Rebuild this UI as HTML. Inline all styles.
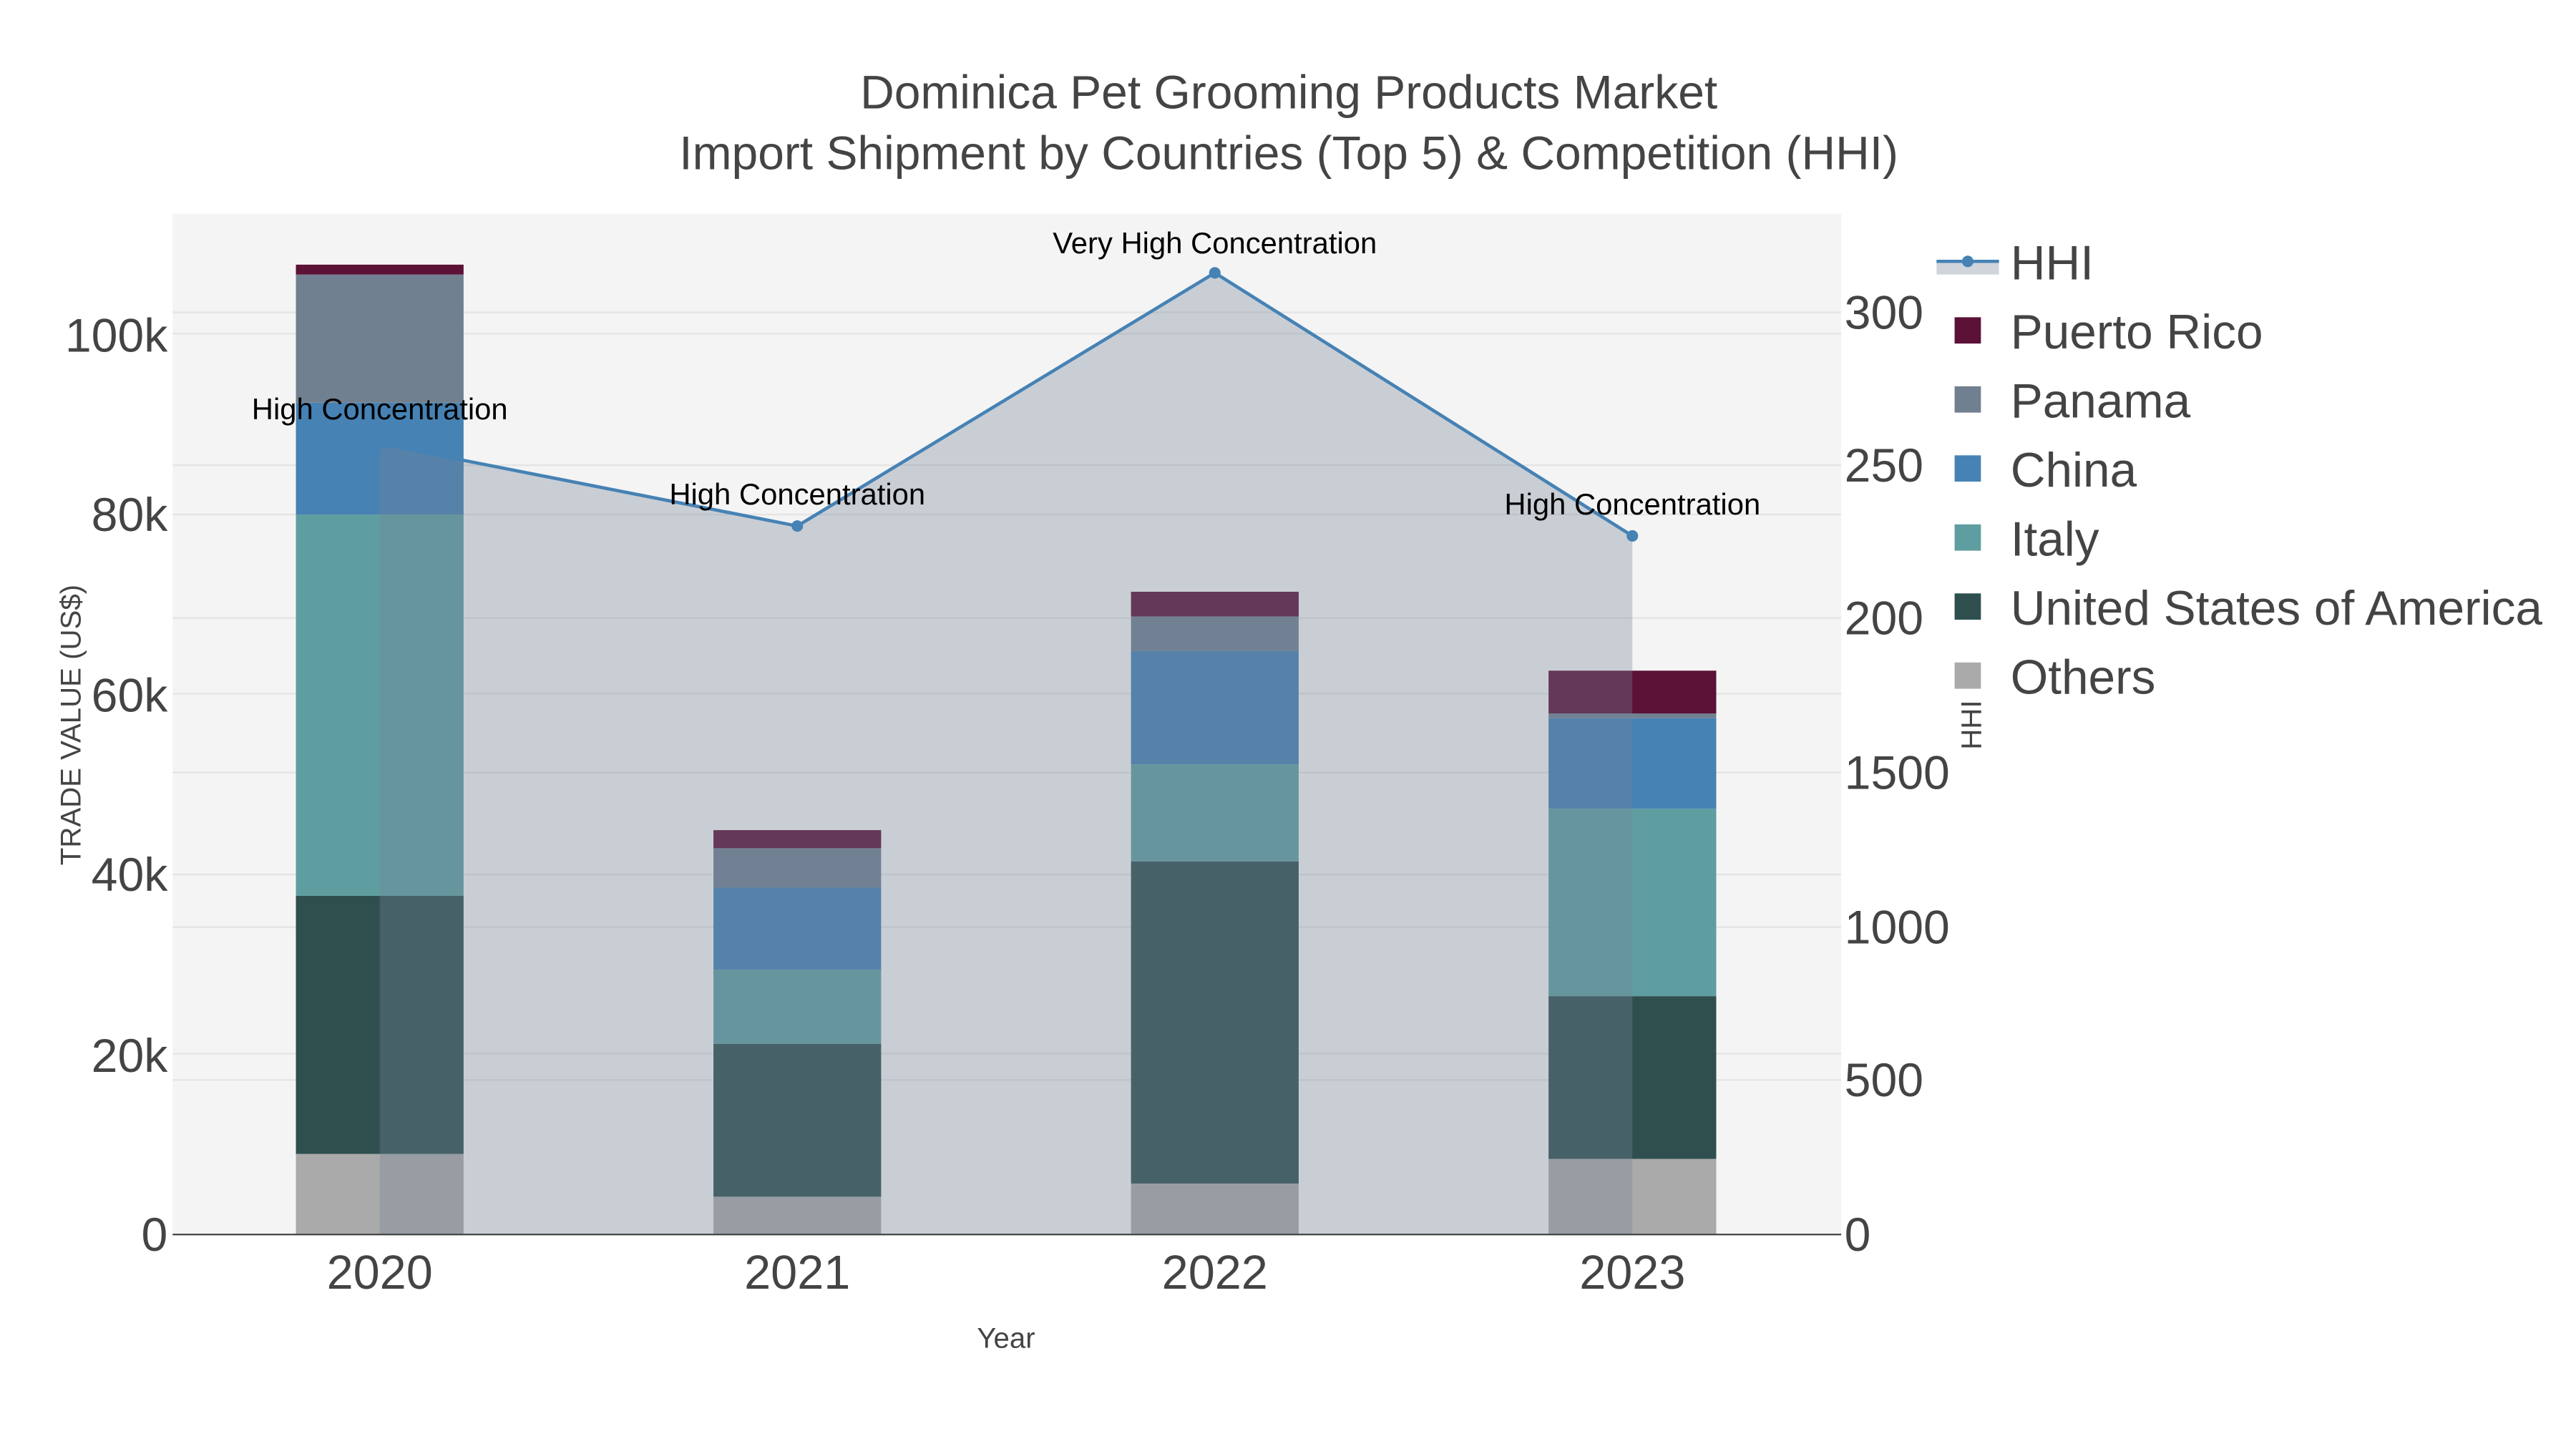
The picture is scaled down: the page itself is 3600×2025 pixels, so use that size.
<!DOCTYPE html>
<html><head><meta charset="utf-8"><style>
html,body{margin:0;padding:0;background:#fff;}
svg{display:block;}
text{font-family:"Liberation Sans",sans-serif;}
</style></head><body>
<svg width="3600" height="2025" viewBox="0 0 1567 881.5" preserveAspectRatio="none" xmlns="http://www.w3.org/2000/svg">
<rect x="0" y="0" width="1570" height="885" fill="#fff"/>
<rect x="105" y="130" width="1015" height="621" fill="#f4f4f4"/>
<g stroke="#e4e4e4" stroke-width="1">
<line x1="105" x2="1120" y1="641" y2="641"/><line x1="105" x2="1120" y1="532" y2="532"/>
<line x1="105" x2="1120" y1="422" y2="422"/><line x1="105" x2="1120" y1="313" y2="313"/>
<line x1="105" x2="1120" y1="203" y2="203"/>
<line x1="105" x2="1120" y1="657" y2="657"/><line x1="105" x2="1120" y1="564" y2="564"/>
<line x1="105" x2="1120" y1="470" y2="470"/><line x1="105" x2="1120" y1="376" y2="376"/>
<line x1="105" x2="1120" y1="283" y2="283"/><line x1="105" x2="1120" y1="190" y2="190"/>
</g>
<g>
<rect x="180" y="702" width="102" height="49" fill="#aaaaaa"/>
<rect x="180" y="545" width="102" height="157" fill="#2f4f4f"/>
<rect x="180" y="313" width="102" height="232" fill="#5f9ea0"/>
<rect x="180" y="245" width="102" height="68" fill="#4682b4"/>
<rect x="180" y="167" width="102" height="78" fill="#708090"/>
<rect x="180" y="161" width="102" height="6" fill="#5c1137"/>

<rect x="434" y="728" width="102" height="23" fill="#aaaaaa"/>
<rect x="434" y="635" width="102" height="93" fill="#2f4f4f"/>
<rect x="434" y="590" width="102" height="45" fill="#5f9ea0"/>
<rect x="434" y="540" width="102" height="50" fill="#4682b4"/>
<rect x="434" y="516" width="102" height="24" fill="#708090"/>
<rect x="434" y="505" width="102" height="11" fill="#5c1137"/>

<rect x="688" y="720" width="102" height="31" fill="#aaaaaa"/>
<rect x="688" y="524" width="102" height="196" fill="#2f4f4f"/>
<rect x="688" y="465" width="102" height="59" fill="#5f9ea0"/>
<rect x="688" y="396" width="102" height="69" fill="#4682b4"/>
<rect x="688" y="375" width="102" height="21" fill="#708090"/>
<rect x="688" y="360" width="102" height="15" fill="#5c1137"/>

<rect x="942" y="705" width="102" height="46" fill="#aaaaaa"/>
<rect x="942" y="606" width="102" height="99" fill="#2f4f4f"/>
<rect x="942" y="492" width="102" height="114" fill="#5f9ea0"/>
<rect x="942" y="437" width="102" height="55" fill="#4682b4"/>
<rect x="942" y="434" width="102" height="3" fill="#708090"/>
<rect x="942" y="408" width="102" height="26" fill="#5c1137"/>
</g>
<polygon points="231,270 485,320 739,166 993,326 993,751 231,751" fill="rgb(118,132,153)" fill-opacity="0.34"/>
<polyline points="231,270 485,320 739,166 993,326" fill="none" stroke="#4682b4" stroke-width="2"/>
<g fill="#4682b4"><circle cx="231" cy="270" r="3.5"/><circle cx="485" cy="320" r="3.5"/><circle cx="739" cy="166" r="3.5"/><circle cx="993" cy="326" r="3.5"/></g>
<line x1="105" x2="1120" y1="751" y2="751" stroke="#444" stroke-width="1"/>
<g font-size="18.2" fill="#000" text-anchor="middle">
<text x="231" y="255">High Concentration</text>
<text x="485" y="307">High Concentration</text>
<text x="739" y="154">Very High Concentration</text>
<text x="993" y="313">High Concentration</text>
</g>
<g font-size="28.7" fill="#444" text-anchor="middle">
<text x="784" y="66">Dominica Pet Grooming Products Market</text>
<text x="784" y="103">Import Shipment by Countries (Top 5) &amp; Competition (HHI)</text>
</g>
<g font-size="28.8" fill="#444" text-anchor="end">
<text x="102" y="761">0</text><text x="102" y="652">20k</text><text x="102" y="542">40k</text>
<text x="102" y="433">60k</text><text x="102" y="323">80k</text><text x="102" y="214">100k</text>
</g>
<g font-size="28.8" fill="#444" text-anchor="start">
<text x="1122" y="761">0</text><text x="1122" y="667">500</text><text x="1122" y="574">1000</text>
<text x="1122" y="480">1500</text><text x="1122" y="386">200</text><text x="1122" y="293">250</text>
<text x="1122" y="200">300</text>
</g>
<g font-size="29" fill="#444" text-anchor="middle">
<text x="231" y="784">2020</text><text x="485" y="784">2021</text><text x="739" y="784">2022</text><text x="993" y="784">2023</text>
</g>
<text x="612" y="820" font-size="17.5" fill="#444" text-anchor="middle">Year</text>
<text transform="translate(49,441) rotate(-90)" font-size="17.5" fill="#444" text-anchor="middle">TRADE VALUE (US$)</text>
<text transform="translate(1205,441) rotate(-90)" font-size="17.5" fill="#444" text-anchor="middle">HHI</text>
<rect x="1178" y="159" width="38" height="8" fill="rgb(118,132,153)" fill-opacity="0.34"/>
<line x1="1178" x2="1216" y1="159" y2="159" stroke="#4682b4" stroke-width="2"/>
<circle cx="1197" cy="159" r="3.5" fill="#4682b4"/>
<g>
<rect x="1189" y="193" width="16" height="16" fill="#5c1137"/>
<rect x="1189" y="235" width="16" height="16" fill="#708090"/>
<rect x="1189" y="277" width="16" height="16" fill="#4682b4"/>
<rect x="1189" y="319" width="16" height="16" fill="#5f9ea0"/>
<rect x="1189" y="361" width="16" height="16" fill="#2f4f4f"/>
<rect x="1189" y="403" width="16" height="16" fill="#aaaaaa"/>
</g>
<g font-size="29.4" fill="#444">
<text x="1223" y="170">HHI</text>
<text x="1223" y="212">Puerto Rico</text>
<text x="1223" y="254">Panama</text>
<text x="1223" y="296">China</text>
<text x="1223" y="338">Italy</text>
<text x="1223" y="380">United States of America</text>
<text x="1223" y="422">Others</text>
</g>
</svg>
</body></html>
